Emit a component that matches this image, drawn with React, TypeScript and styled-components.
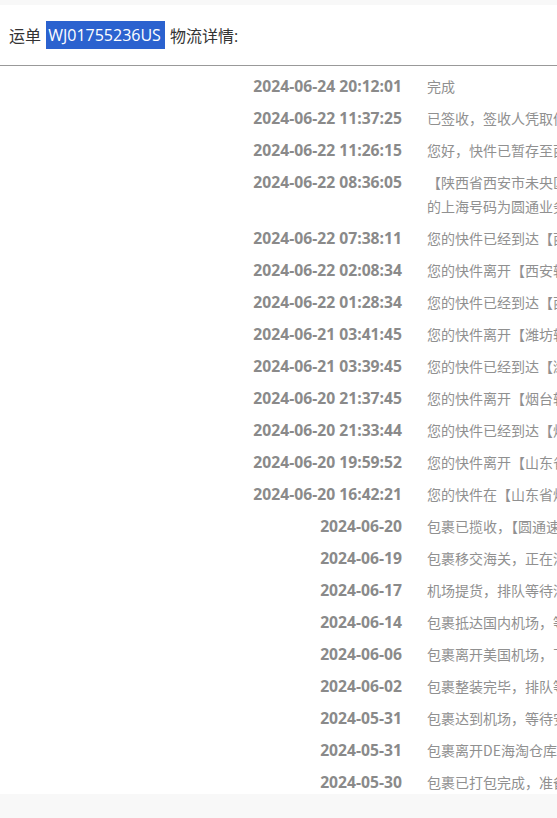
import React from "react";
import styled, { createGlobalStyle } from "styled-components";

const GlobalStyle = createGlobalStyle`
  html, body {
    margin: 0;
    padding: 0;
    background: #f8f8f8;
    overflow: hidden;
  }
  * { box-sizing: border-box; }
`;

const Page = styled.div`
  padding-top: 5px;
  background: #f8f8f8;
  height: 818px;
`;

const Card = styled.div`
  background: #ffffff;
  height: 789px;
  overflow: hidden;
`;

const Header = styled.div`
  height: 61px;
  display: flex;
  align-items: center;
  padding-left: 9px;
  border-bottom: 1px solid #999999;
  font-family: "Open Sans", "Noto Sans CJK SC", sans-serif;
  font-size: 16px;
  color: #333333;
  white-space: pre;
`;

const Highlight = styled.span`
  display: inline-block;
  background: #2b62cf;
  color: #ffffff;
  line-height: 28px;
  padding: 0 4px 0 2px;
  margin: 0 1px;
`;

const List = styled.div`
  padding-top: 4px;
`;

const Row = styled.div`
  display: grid;
  grid-template-columns: 402px 394px;
  column-gap: 25px;
  padding: 4px 0;
  line-height: 24px;
`;

const DateCell = styled.div`
  text-align: right;
  font-family: "Open Sans", "Noto Sans", sans-serif;
  font-weight: 700;
  font-size: 15.7px;
  color: #8a8a8a;
  white-space: nowrap;
`;

const Desc = styled.div`
  font-family: "Noto Sans CJK SC", sans-serif;
  font-size: 14px;
  color: #909090;
`;

const events: [string, string][] = [
  ["2024-06-24 20:12:01", "完成"],
  ["2024-06-22 11:37:25", "已签收，签收人凭取件码签收。"],
  ["2024-06-22 11:26:15", "您好，快件已暂存至西安未央区菜鸟驿站，请及时取件。"],
  [
    "2024-06-22 08:36:05",
    "【陕西省西安市未央区公司】快件派送中，有疑问请联系派件员的上海号码为圆通业务员专用号码",
  ],
  ["2024-06-22 07:38:11", "您的快件已经到达【西安转运中心】"],
  ["2024-06-22 02:08:34", "您的快件离开【西安转运中心】，正在发往下一站"],
  ["2024-06-22 01:28:34", "您的快件已经到达【西安转运中心】"],
  ["2024-06-21 03:41:45", "您的快件离开【潍坊转运中心】，正在发往【西安转运中心】"],
  ["2024-06-21 03:39:45", "您的快件已经到达【潍坊转运中心】"],
  ["2024-06-20 21:37:45", "您的快件离开【烟台转运中心】，发往【潍坊转运中心】"],
  ["2024-06-20 21:33:44", "您的快件已经到达【烟台转运中心】"],
  ["2024-06-20 19:59:52", "您的快件离开【山东省烟台市公司】，发往【烟台转运中心】"],
  ["2024-06-20 16:42:21", "您的快件在【山东省烟台市公司】已揽收"],
  ["2024-06-20", "包裹已揽收，【圆通速递】国内段开始派送"],
  ["2024-06-19", "包裹移交海关，正在清关中"],
  ["2024-06-17", "机场提货，排队等待清关"],
  ["2024-06-14", "包裹抵达国内机场，等待提货"],
  ["2024-06-06", "包裹离开美国机场，飞往中国"],
  ["2024-06-02", "包裹整装完毕，排队等待航班"],
  ["2024-05-31", "包裹达到机场，等待安检"],
  ["2024-05-31", "包裹离开DE海淘仓库，前往机场"],
  ["2024-05-30", "包裹已打包完成，准备出库"],
];

export default function App() {
  return (
    <>
      <GlobalStyle />
      <Page>
        <Card>
          <Header>
            {"运单 "}
            <Highlight>WJ01755236US</Highlight>
            {" 物流详情:"}
          </Header>
          <List>
            {events.map(([date, text], i) => (
              <Row key={i}>
                <DateCell>{date}</DateCell>
                <Desc>{text}</Desc>
              </Row>
            ))}
          </List>
        </Card>
      </Page>
    </>
  );
}
